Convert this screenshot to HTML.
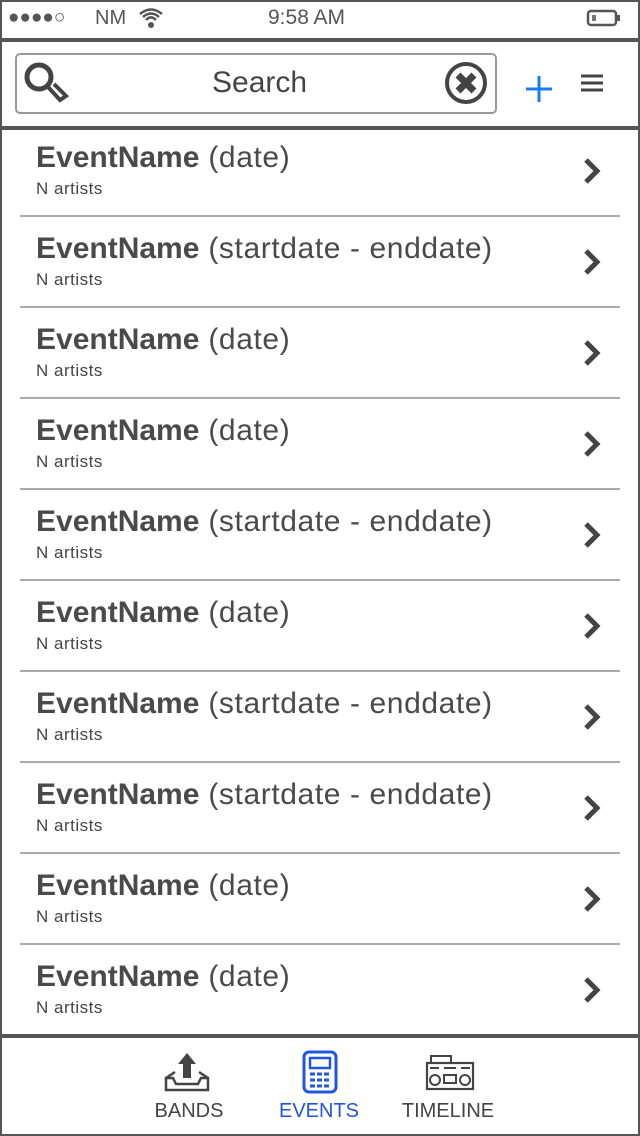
<!DOCTYPE html>
<html><head><meta charset="utf-8"><style>
*{margin:0;padding:0;box-sizing:border-box}
body{width:640px;height:1136px;background:#fff;font-family:"Liberation Sans",sans-serif;color:#444;position:relative;overflow:hidden}
.frame{position:absolute;left:0;top:0;width:640px;height:1136px;border:2px solid #555}
.abs{position:absolute}
.hl{position:absolute;left:0;width:640px;background:#555}
.row{position:absolute;left:0;width:640px;height:91px}
.t{position:absolute;left:36px;top:15px;font-size:30px;letter-spacing:0.6px;color:#4a4a4a;white-space:nowrap}
.t b{font-weight:bold;letter-spacing:0}
.s{position:absolute;left:36px;top:53px;font-size:17px;letter-spacing:0.5px;color:#444}
.sep{position:absolute;left:20px;width:600px;bottom:0;height:2px;background:#aaa}
.chev{position:absolute;left:582px;top:30px}
.tab{position:absolute;top:1100px;font-size:20px;text-align:center}
</style></head><body>
<div class="frame"></div>
<div class="abs" style="left:8px;top:7px;font-size:19px;letter-spacing:0px;color:#555">●●●●○</div>
<div class="abs" style="left:95px;top:7px;font-size:20px;color:#555">NM</div>
<svg class="abs" style="left:138px;top:6px" width="26" height="24" viewBox="0 0 26 24"><path d="M2 8 Q13 -1 24 8 M5 11 Q13 4 21 11 M8 14 Q13 9 18 14" stroke="#555" stroke-width="2.5" fill="none"/><circle cx="13" cy="19" r="3" fill="#555"/></svg>
<div class="abs" style="left:268px;top:6px;font-size:21px;color:#555">9:58 AM</div>
<svg class="abs" style="left:586px;top:9px" width="36" height="18"><rect x="2" y="2" width="28" height="14" rx="3" fill="none" stroke="#555" stroke-width="2.5"/><rect x="31" y="6" width="3" height="6" fill="#555"/><rect x="6" y="6" width="4" height="6" fill="#777"/></svg>
<div class="hl" style="top:38px;height:4px"></div>
<div class="abs" style="left:15px;top:53px;width:482px;height:61px;border:2px solid #999;border-radius:5px"></div>
<svg class="abs" style="left:22px;top:60px" width="50" height="48"><circle cx="17" cy="17" r="12" fill="none" stroke="#444" stroke-width="5"/><path d="M26 27 L38 40 L44 36 L32 24" fill="none" stroke="#444" stroke-width="4"/></svg>
<div class="abs" style="left:212px;top:66px;font-size:30px;color:#444">Search</div>
<svg class="abs" style="left:443px;top:60px" width="48" height="48"><circle cx="23" cy="23" r="19" fill="none" stroke="#444" stroke-width="4"/><path d="M15 15 L31 31 M31 15 L15 31" stroke="#444" stroke-width="7"/></svg>
<svg class="abs" style="left:524px;top:74px" width="30" height="30"><path d="M15 2 V28 M2 15 H28" stroke="#1a7af5" stroke-width="3"/></svg>
<svg class="abs" style="left:578px;top:72px" width="28" height="22"><path d="M3 4 H25 M3 11 H25 M3 18 H25" stroke="#444" stroke-width="3"/></svg>
<div class="hl" style="top:126px;height:4px"></div>
<div class="row" style="top:126px"><div class="t"><b>EventName</b> (date)</div><div class="s">N artists</div><div class="sep"></div><svg class="chev" width="20" height="30"><path d="M4 4 L15 15 L4 26" fill="none" stroke="#444" stroke-width="5"/></svg></div>
<div class="row" style="top:217px"><div class="t"><b>EventName</b> (startdate - enddate)</div><div class="s">N artists</div><div class="sep"></div><svg class="chev" width="20" height="30"><path d="M4 4 L15 15 L4 26" fill="none" stroke="#444" stroke-width="5"/></svg></div>
<div class="row" style="top:308px"><div class="t"><b>EventName</b> (date)</div><div class="s">N artists</div><div class="sep"></div><svg class="chev" width="20" height="30"><path d="M4 4 L15 15 L4 26" fill="none" stroke="#444" stroke-width="5"/></svg></div>
<div class="row" style="top:399px"><div class="t"><b>EventName</b> (date)</div><div class="s">N artists</div><div class="sep"></div><svg class="chev" width="20" height="30"><path d="M4 4 L15 15 L4 26" fill="none" stroke="#444" stroke-width="5"/></svg></div>
<div class="row" style="top:490px"><div class="t"><b>EventName</b> (startdate - enddate)</div><div class="s">N artists</div><div class="sep"></div><svg class="chev" width="20" height="30"><path d="M4 4 L15 15 L4 26" fill="none" stroke="#444" stroke-width="5"/></svg></div>
<div class="row" style="top:581px"><div class="t"><b>EventName</b> (date)</div><div class="s">N artists</div><div class="sep"></div><svg class="chev" width="20" height="30"><path d="M4 4 L15 15 L4 26" fill="none" stroke="#444" stroke-width="5"/></svg></div>
<div class="row" style="top:672px"><div class="t"><b>EventName</b> (startdate - enddate)</div><div class="s">N artists</div><div class="sep"></div><svg class="chev" width="20" height="30"><path d="M4 4 L15 15 L4 26" fill="none" stroke="#444" stroke-width="5"/></svg></div>
<div class="row" style="top:763px"><div class="t"><b>EventName</b> (startdate - enddate)</div><div class="s">N artists</div><div class="sep"></div><svg class="chev" width="20" height="30"><path d="M4 4 L15 15 L4 26" fill="none" stroke="#444" stroke-width="5"/></svg></div>
<div class="row" style="top:854px"><div class="t"><b>EventName</b> (date)</div><div class="s">N artists</div><div class="sep"></div><svg class="chev" width="20" height="30"><path d="M4 4 L15 15 L4 26" fill="none" stroke="#444" stroke-width="5"/></svg></div>
<div class="row" style="top:945px"><div class="t"><b>EventName</b> (date)</div><div class="s">N artists</div><svg class="chev" width="20" height="30"><path d="M4 4 L15 15 L4 26" fill="none" stroke="#444" stroke-width="5"/></svg></div>
<div class="hl" style="top:1034px;height:4px"></div>
<svg class="abs" style="left:163px;top:1050px" width="52" height="44"><path d="M15 14 L24 3 L33 14 L28 14 L28 28 L20 28 L20 14 Z" fill="#444"/><path d="M3 28 L12 22 M45 28 L36 22 M3 28 L3 40 L45 40 L45 28 L38 28 L35 34 L13 34 L10 28 Z" fill="none" stroke="#444" stroke-width="2.5"/></svg>
<div class="tab" style="left:150px;width:78px;color:#444">BANDS</div>
<svg class="abs" style="left:302px;top:1050px" width="36" height="44"><rect x="2" y="2" width="32" height="40" rx="5" fill="none" stroke="#2255dd" stroke-width="3"/><rect x="8" y="8" width="20" height="10" fill="none" stroke="#2255dd" stroke-width="2.5"/><path d="M8 24 H28 M8 30 H28 M8 36 H28" stroke="#2255dd" stroke-width="3" stroke-dasharray="5 2"/></svg>
<div class="tab" style="left:270px;width:98px;color:#2255dd">EVENTS</div>
<svg class="abs" style="left:425px;top:1055px" width="50" height="36"><rect x="6" y="1" width="20" height="7" fill="none" stroke="#444" stroke-width="2"/><rect x="2" y="8" width="46" height="26" fill="none" stroke="#444" stroke-width="2.2"/><circle cx="10" cy="25" r="5" fill="none" stroke="#444" stroke-width="2"/><circle cx="40" cy="25" r="5" fill="none" stroke="#444" stroke-width="2"/><rect x="19" y="20" width="12" height="8" fill="none" stroke="#444" stroke-width="2"/><path d="M5 13 H14 M19 13 H31 M36 13 H45" stroke="#444" stroke-width="2"/></svg>
<div class="tab" style="left:395px;width:106px;color:#444">TIMELINE</div>
</body></html>
